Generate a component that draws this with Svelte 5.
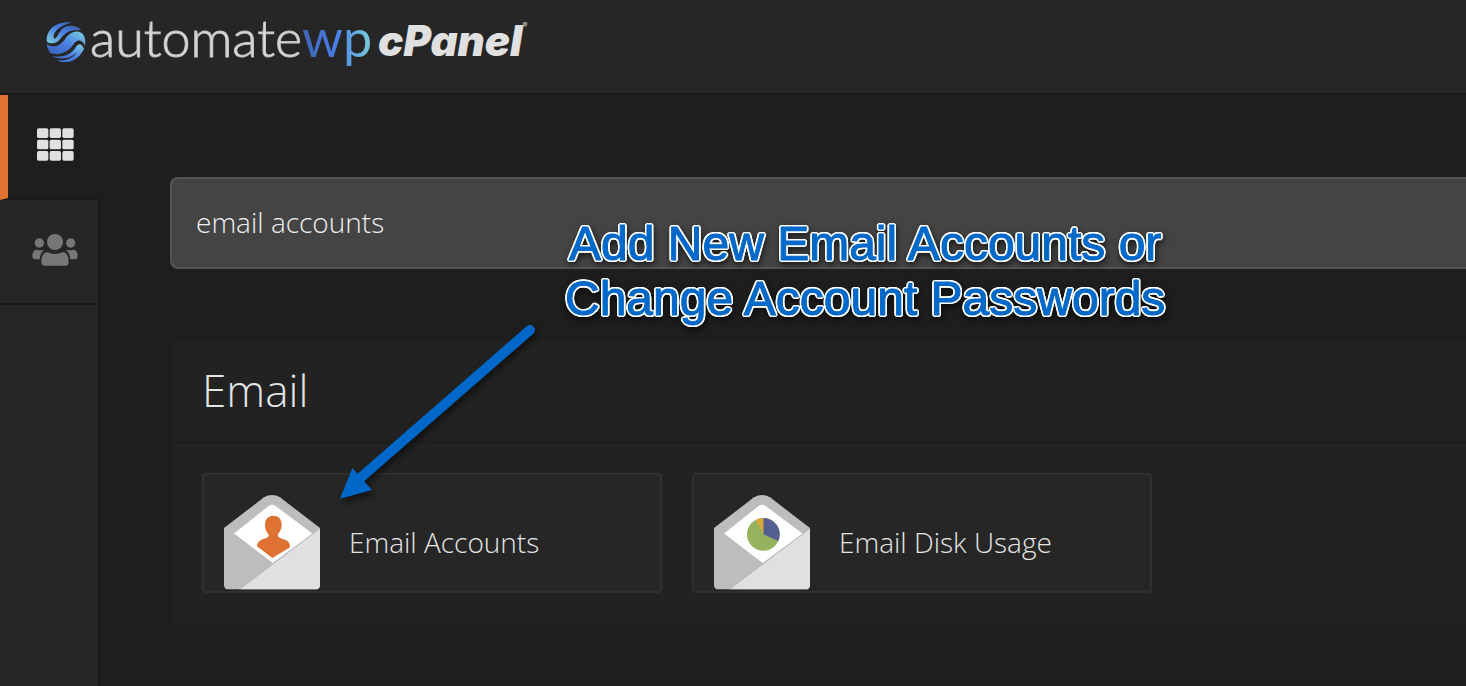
<script>
    let query = "email accounts";

    const apps = [
        { name: "Email Accounts", icon: "person" },
        { name: "Email Disk Usage", icon: "pie" },
    ];
</script>

<div class="page">
    <header class="topbar">
        <a class="brand" href="#home">
            <svg class="brand-mark" viewBox="0 0 120 120" aria-hidden="true">
                <defs>
                    <linearGradient id="swirl-a" x1="0" y1="1" x2="1" y2="0">
                        <stop offset="0" stop-color="#7ed0de" />
                        <stop offset="0.5" stop-color="#4a7fe0" />
                        <stop offset="1" stop-color="#33549c" />
                    </linearGradient>
                    <linearGradient id="swirl-b" x1="0" y1="1" x2="1" y2="0">
                        <stop offset="0" stop-color="#3a62b8" />
                        <stop offset="0.5" stop-color="#4a80e4" />
                        <stop offset="1" stop-color="#7ed0de" />
                    </linearGradient>
                </defs>
                <path fill="url(#swirl-a)" d="M76 2C32 -6 0 24 2 56C6 68 30 66 40 54C54 38 62 22 106 24C90 8 66 8 52 18C38 28 36 46 26 50C16 42 30 12 76 2Z" />
                <path fill="url(#swirl-b)" d="M2 67C28 82 46 66 58 50C70 32 92 22 108 34C118 44 119 58 117 72C108 50 92 52 82 68C66 92 34 102 12 92C6 84 3 76 2 67Z" />
                <path fill="url(#swirl-b)" d="M16 102C50 108 76 98 90 74C96 64 106 62 114 80C100 114 58 132 32 114C58 118 84 108 94 90C76 108 46 116 16 102Z" />
            </svg>
            <span class="brand-name">automate<span class="brand-wp">wp</span></span>
            <span class="brand-product">cPanel<sup>®</sup></span>
        </a>
    </header>

    <div class="body">
        <nav class="sidebar" aria-label="Main menu">
            <a class="nav-item active" href="#tools" aria-label="Tools">
                <svg width="38" height="34" viewBox="0 0 114 102" fill="#e0e0e0" aria-hidden="true">
                    {#each [1, 35, 69] as y}
                        {#each [0, 38, 76] as x}
                            <rect {x} {y} width="34" height="29" rx="5" />
                        {/each}
                    {/each}
                </svg>
            </a>
            <a class="nav-item" href="#users" aria-label="User Manager">
                <svg width="46" height="32" viewBox="0 0 138 96" fill="#777" aria-hidden="true">
                    <circle cx="69" cy="24" r="24" />
                    <circle cx="22" cy="27" r="14" />
                    <circle cx="116" cy="27" r="14" />
                    <path d="M45 55C51 55 55 60 69 60S87 55 93 55C104 55 110 68 110 84Q110 95 100 95H38Q28 95 28 84C28 68 34 55 45 55Z" />
                    <path d="M14 47C20 49 26 49 36 48C28 54 24 64 23 76H10Q1 76 1 66C1 55 6 47 14 47Z" />
                    <path d="M124 47C118 49 112 49 102 48C110 54 114 64 115 76H128Q137 76 137 66C137 55 132 47 124 47Z" />
                </svg>
            </a>
            <div class="nav-rest"></div>
        </nav>

        <main class="content">
            <input class="search" type="text" aria-label="Search tools" bind:value={query} />

            <section class="panel">
                <h2 class="panel-title">Email</h2>
                <div class="cards">
                    {#each apps as app}
                        <a class="card" href="#{app.icon}">
                            <svg class="card-icon" viewBox="0 0 288 288" aria-hidden="true">
                                <path fill="#bdbdbd" d="M0 102L120 10Q144 -4 168 10L288 102V272Q288 286 274 286H14Q0 286 0 272Z" />
                                <path fill="#fff" d="M29 119L134 36Q144 28 155 36L266 119L145 208Z" />
                                <path fill="#e0e0e0" d="M288 103V272Q288 286 274 286H46Z" />
                                <path fill="none" stroke="#a6a6a6" stroke-width="2" d="M29 119L145 208M288 103L46 286" />
                                {#if app.icon === "person"}
                                    <path
                                        fill="#de7232"
                                        d="M148 65C164 65 174 76 173 94C172 108 166 114 162 122C160 132 174 132 186 138C196 144 198 152 198 160L145 192L99 157C99 148 102 143 112 137C122 132 136 132 134 122C128 114 123 106 123 93C123 76 132 65 148 65Z"
                                    />
                                {:else}
                                    <circle cx="148" cy="121" r="49" fill="#95b25c" />
                                    <path fill="#555e93" d="M148 121V72A49 49 0 0 1 193 141Z" />
                                    <path fill="#dba73a" d="M148 121V72A49 49 0 0 0 127 77Z" />
                                {/if}
                            </svg>
                            <span class="card-label">{app.name}</span>
                        </a>
                    {/each}
                </div>
            </section>
        </main>
    </div>

    <p class="callout">Add New Email Accounts or<br />Change Account Passwords</p>
    <svg class="arrow" width="210" height="190" viewBox="0 0 630 570" aria-hidden="true">
        <path stroke="#0068c8" stroke-width="30" stroke-linecap="round" d="M570 45L60 490" />
        <path fill="#0068c8" d="M0 551L37 459L96 525Z" />
    </svg>
</div>

<style>
    :global(body) {
        background: #1e1e1e;
    }

    .page {
        position: relative;
        display: flex;
        flex-direction: column;
        min-height: 100vh;
        overflow: hidden;
        font-family: "Open Sans", sans-serif;
        font-weight: 300;
        color: #e4e4e4;
    }

    a {
        color: inherit;
        text-decoration: none;
    }

    .topbar {
        box-sizing: border-box;
        height: 95px;
        padding: 8px 46px;
        border-bottom: 2px solid #1a1a1a;
        background: #262626;
    }

    .brand {
        display: inline-flex;
        align-items: flex-start;
    }

    .brand-mark {
        width: 40px;
        height: 40px;
        margin: 14px 4px 0 0;
    }

    .brand-name {
        font-family: Lato, sans-serif;
        font-size: 52px;
        font-weight: 300;
        line-height: 58px;
        color: #dadada;
        -webkit-text-stroke: 1px #c4c4c4;
    }

    .brand-wp {
        font-weight: 400;
        color: transparent;
        background: linear-gradient(90deg, #3d66b8, #4a7fe6 50%, #7ccfdd);
        background-clip: text;
        -webkit-text-stroke: 0;
    }

    .brand-product {
        margin-left: 6px;
        font-family: Inter, sans-serif;
        font-size: 42px;
        font-style: italic;
        font-weight: 900;
        line-height: 66px;
        color: #e0e0e0;
    }

    .brand-product sup {
        font-size: 7px;
        font-weight: 400;
        line-height: 0;
        vertical-align: 28px;
    }

    .body {
        display: flex;
        flex: 1;
    }

    .sidebar {
        display: flex;
        flex-direction: column;
        flex: none;
        width: 100px;
    }

    .nav-item {
        box-sizing: border-box;
        display: flex;
        align-items: center;
        height: 105px;
        padding: 0 0 4px 32px;
        border-right: 2px solid #1a1a1a;
        border-bottom: 2px solid #1a1a1a;
        background: #262626;
    }

    .nav-item.active {
        padding-left: 29px;
        border-left: 8px solid #de7232;
        border-right: none;
        background: none;
    }

    .nav-rest {
        flex: 1;
        border-right: 2px solid #1a1a1a;
        background: #262626;
    }

    .content {
        flex: 1;
        min-width: 0;
        padding: 82px 0 60px 70px;
    }

    .search {
        box-sizing: border-box;
        display: block;
        width: 100%;
        height: 92px;
        padding: 0 24px 2px;
        border: 2px solid #555;
        border-right: none;
        border-radius: 8px 0 0 8px;
        outline: none;
        background: #444;
        font: inherit;
        font-size: 28px;
        color: #eee;
    }

    .panel {
        margin: 72px 0 0 2px;
        border-radius: 4px 0 0 4px;
        background: #222;
    }

    .panel-title {
        margin: 0;
        padding: 0 30px 2px;
        border-bottom: 2px solid #1d1d1d;
        font-size: 44px;
        font-weight: 300;
        line-height: 98px;
    }

    .cards {
        display: flex;
        flex-wrap: wrap;
        gap: 30px;
        padding: 30px;
    }

    .card {
        box-sizing: border-box;
        display: flex;
        align-items: center;
        gap: 29px;
        width: 460px;
        height: 120px;
        padding: 18px 20px 0;
        border: 2px solid #303030;
        border-radius: 4px;
        background: #262626;
    }

    .card-icon {
        width: 96px;
        height: 96px;
    }

    .card-label {
        font-size: 28px;
    }

    /* annotation drawn over the page */
    .callout {
        position: absolute;
        top: 216px;
        left: 565px;
        margin: 0;
        font-family: "Liberation Sans", Arial, sans-serif;
        font-size: 48px;
        font-weight: 400;
        line-height: 55px;
        text-align: center;
        white-space: nowrap;
        color: #0068c8;
        -webkit-text-stroke: 1px #0068c8;
        text-shadow:
            2px 0 #fff,
            -2px 0 #fff,
            0 2px #fff,
            0 -2px #fff,
            2px 1px #fff,
            -2px 1px #fff,
            2px -1px #fff,
            -2px -1px #fff,
            1px 2px #fff,
            -1px 2px #fff,
            1px -2px #fff,
            -1px -2px #fff;
        filter: drop-shadow(1px 3px 3px rgba(0, 0, 0, 0.6));
    }

    .arrow {
        position: absolute;
        top: 315px;
        left: 340px;
        overflow: visible;
        filter: drop-shadow(2px 4px 3px rgba(0, 0, 0, 0.5));
    }
</style>
